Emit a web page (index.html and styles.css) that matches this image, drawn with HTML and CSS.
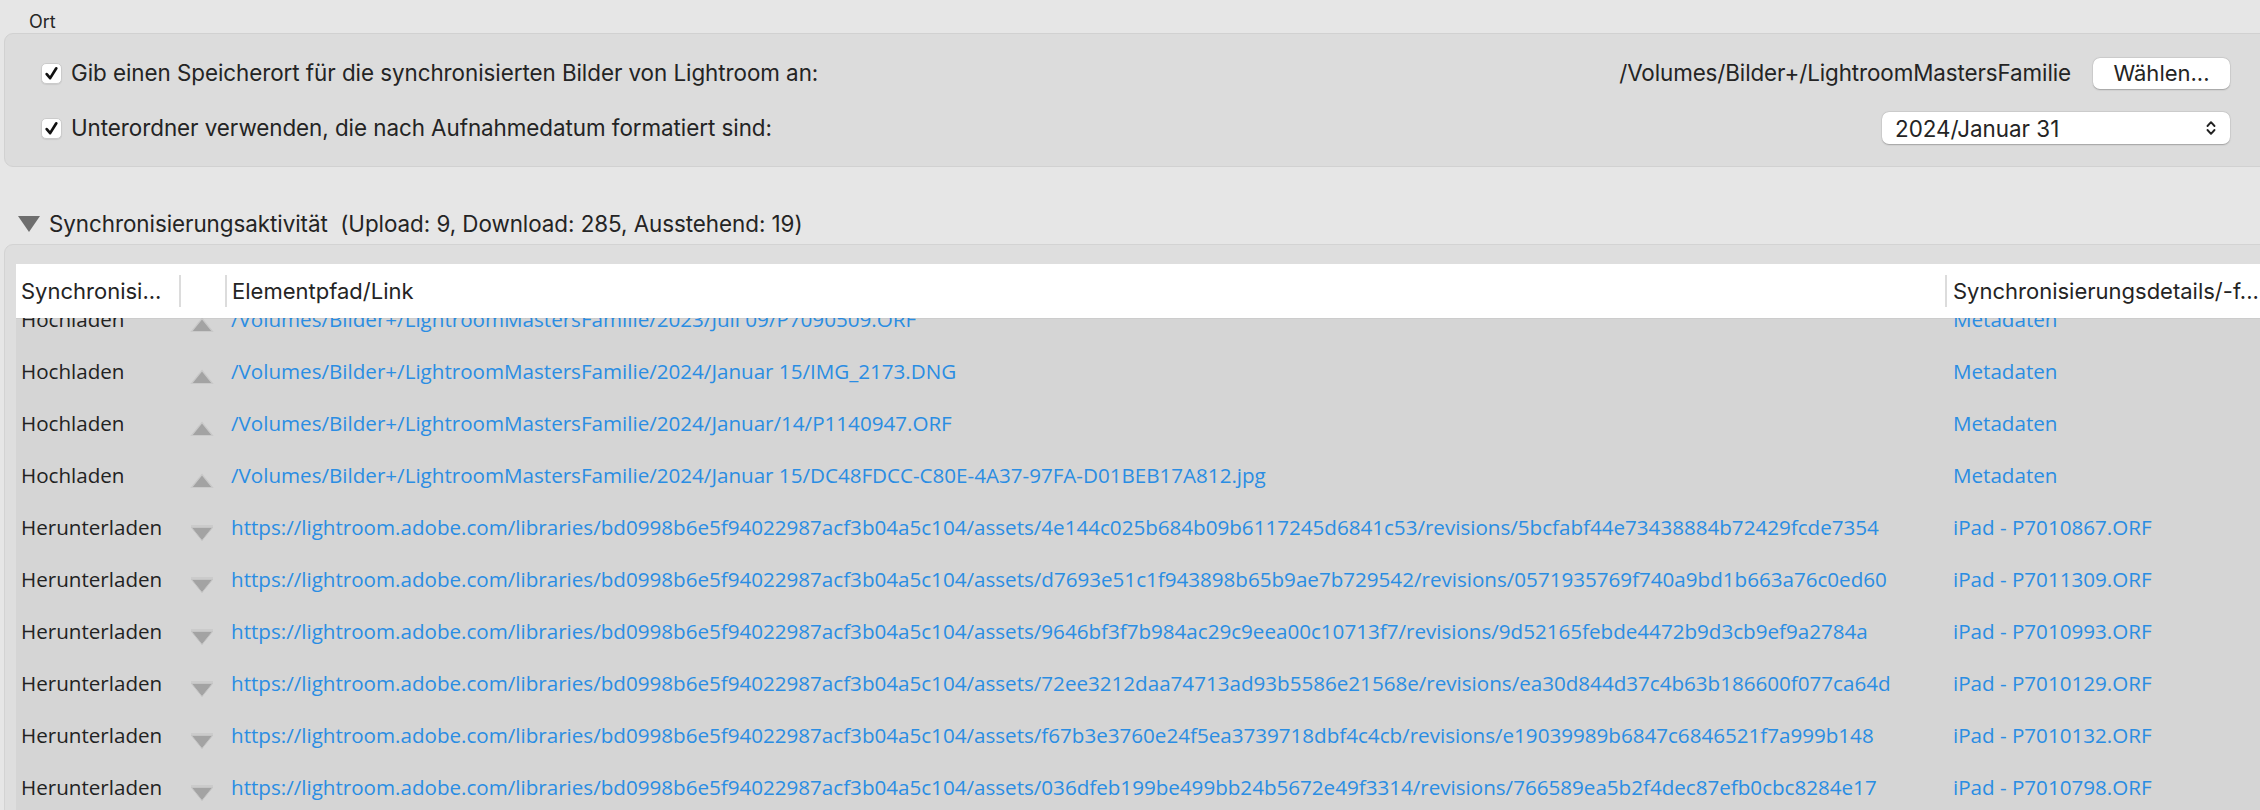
FILE: index.html
```html
<!DOCTYPE html>
<html lang="de">
<head>
<meta charset="utf-8">
<title>Lightroom Synchronisierung</title>
<link rel="stylesheet" href="styles.css">
</head>
<body>
<div class="page">
  <div class="group-label">Ort</div>
  <div class="group">
    <div class="opt-row">
      <div class="check">
        <span class="box"><svg width="21" height="21" viewBox="0 0 21 21"><path d="M5.2 11.2 L9 15.6 L15.8 4.8" fill="none" stroke="#111" stroke-width="3" stroke-linecap="round" stroke-linejoin="round"/></svg></span>
        <span class="check-text">Gib einen Speicherort für die synchronisierten Bilder von Lightroom an:</span>
      </div>
      <div class="spacer"></div>
      <span class="path">/Volumes/Bilder+/LightroomMastersFamilie</span>
      <div class="btn">Wählen...</div>
    </div>
    <div class="opt-row">
      <div class="check">
        <span class="box"><svg width="21" height="21" viewBox="0 0 21 21"><path d="M5.2 11.2 L9 15.6 L15.8 4.8" fill="none" stroke="#111" stroke-width="3" stroke-linecap="round" stroke-linejoin="round"/></svg></span>
        <span class="check-text">Unterordner verwenden, die nach Aufnahmedatum formatiert sind:</span>
      </div>
      <div class="spacer"></div>
      <div class="select">
        <span>2024/Januar 31</span>
        <svg width="12" height="18" viewBox="0 0 12 18"><path d="M2.5 7 L6 3.2 L9.5 7 M2.5 11 L6 14.8 L9.5 11" fill="none" stroke="#222" stroke-width="1.9" stroke-linecap="round" stroke-linejoin="round"/></svg>
      </div>
    </div>
  </div>

  <div class="section-title">
    <svg width="22" height="16" viewBox="0 0 22 16"><polygon points="0,0 22,0 11,16" fill="#6e6e6e"/></svg>
    <span class="section-text">Synchronisierungsaktivität&nbsp; (Upload: 9, Download: 285, Ausstehend: 19)</span>
  </div>

  <div class="table-wrap">
    <div class="thead cols">
      <div class="th c1"><span class="th-in">Synchronisi...</span></div>
      <div class="th c2"><span class="th-in sep"></span></div>
      <div class="th c3"><span class="th-in sep">Elementpfad/Link</span></div>
      <div class="th c4"><span class="th-in sep">Synchronisierungsdetails/-f...</span></div>
    </div>
    <div class="tbody">
      <div class="rows">
        <div class="row cols">
          <div class="td c1">Hochladen</div>
          <div class="td c2"><svg class="up" width="24" height="16" viewBox="0 0 24 16"><polygon points="12,1.5 22.5,14.5 1.5,14.5" fill="#a3a3a3" stroke="#c9c9c9" stroke-width="1.2"/></svg></div>
          <div class="td c3 link">/Volumes/Bilder+/LightroomMastersFamilie/2023/Juli 09/P7090509.ORF</div>
          <div class="td c4 link">Metadaten</div>
        </div>
        <div class="row cols">
          <div class="td c1">Hochladen</div>
          <div class="td c2"><svg class="up" width="24" height="16" viewBox="0 0 24 16"><polygon points="12,1.5 22.5,14.5 1.5,14.5" fill="#a3a3a3" stroke="#c9c9c9" stroke-width="1.2"/></svg></div>
          <div class="td c3 link">/Volumes/Bilder+/LightroomMastersFamilie/2024/Januar 15/IMG_2173.DNG</div>
          <div class="td c4 link">Metadaten</div>
        </div>
        <div class="row cols">
          <div class="td c1">Hochladen</div>
          <div class="td c2"><svg class="up" width="24" height="16" viewBox="0 0 24 16"><polygon points="12,1.5 22.5,14.5 1.5,14.5" fill="#a3a3a3" stroke="#c9c9c9" stroke-width="1.2"/></svg></div>
          <div class="td c3 link">/Volumes/Bilder+/LightroomMastersFamilie/2024/Januar/14/P1140947.ORF</div>
          <div class="td c4 link">Metadaten</div>
        </div>
        <div class="row cols">
          <div class="td c1">Hochladen</div>
          <div class="td c2"><svg class="up" width="24" height="16" viewBox="0 0 24 16"><polygon points="12,1.5 22.5,14.5 1.5,14.5" fill="#a3a3a3" stroke="#c9c9c9" stroke-width="1.2"/></svg></div>
          <div class="td c3 link">/Volumes/Bilder+/LightroomMastersFamilie/2024/Januar 15/DC48FDCC-C80E-4A37-97FA-D01BEB17A812.jpg</div>
          <div class="td c4 link">Metadaten</div>
        </div>
        <div class="row cols">
          <div class="td c1">Herunterladen</div>
          <div class="td c2"><svg class="down" width="24" height="18" viewBox="0 0 24 18"><rect x="1" y="1" width="22" height="2.5" fill="#cbcbcb"/><polygon points="1.5,3.5 22.5,3.5 12,16.5" fill="#a3a3a3" stroke="#c4c4c4" stroke-width="1"/></svg></div>
          <div class="td c3 link">https://lightroom.adobe.com/libraries/bd0998b6e5f94022987acf3b04a5c104/assets/4e144c025b684b09b6117245d6841c53/revisions/5bcfabf44e73438884b72429fcde7354</div>
          <div class="td c4 link">iPad - P7010867.ORF</div>
        </div>
        <div class="row cols">
          <div class="td c1">Herunterladen</div>
          <div class="td c2"><svg class="down" width="24" height="18" viewBox="0 0 24 18"><rect x="1" y="1" width="22" height="2.5" fill="#cbcbcb"/><polygon points="1.5,3.5 22.5,3.5 12,16.5" fill="#a3a3a3" stroke="#c4c4c4" stroke-width="1"/></svg></div>
          <div class="td c3 link">https://lightroom.adobe.com/libraries/bd0998b6e5f94022987acf3b04a5c104/assets/d7693e51c1f943898b65b9ae7b729542/revisions/0571935769f740a9bd1b663a76c0ed60</div>
          <div class="td c4 link">iPad - P7011309.ORF</div>
        </div>
        <div class="row cols">
          <div class="td c1">Herunterladen</div>
          <div class="td c2"><svg class="down" width="24" height="18" viewBox="0 0 24 18"><rect x="1" y="1" width="22" height="2.5" fill="#cbcbcb"/><polygon points="1.5,3.5 22.5,3.5 12,16.5" fill="#a3a3a3" stroke="#c4c4c4" stroke-width="1"/></svg></div>
          <div class="td c3 link">https://lightroom.adobe.com/libraries/bd0998b6e5f94022987acf3b04a5c104/assets/9646bf3f7b984ac29c9eea00c10713f7/revisions/9d52165febde4472b9d3cb9ef9a2784a</div>
          <div class="td c4 link">iPad - P7010993.ORF</div>
        </div>
        <div class="row cols">
          <div class="td c1">Herunterladen</div>
          <div class="td c2"><svg class="down" width="24" height="18" viewBox="0 0 24 18"><rect x="1" y="1" width="22" height="2.5" fill="#cbcbcb"/><polygon points="1.5,3.5 22.5,3.5 12,16.5" fill="#a3a3a3" stroke="#c4c4c4" stroke-width="1"/></svg></div>
          <div class="td c3 link">https://lightroom.adobe.com/libraries/bd0998b6e5f94022987acf3b04a5c104/assets/72ee3212daa74713ad93b5586e21568e/revisions/ea30d844d37c4b63b186600f077ca64d</div>
          <div class="td c4 link">iPad - P7010129.ORF</div>
        </div>
        <div class="row cols">
          <div class="td c1">Herunterladen</div>
          <div class="td c2"><svg class="down" width="24" height="18" viewBox="0 0 24 18"><rect x="1" y="1" width="22" height="2.5" fill="#cbcbcb"/><polygon points="1.5,3.5 22.5,3.5 12,16.5" fill="#a3a3a3" stroke="#c4c4c4" stroke-width="1"/></svg></div>
          <div class="td c3 link">https://lightroom.adobe.com/libraries/bd0998b6e5f94022987acf3b04a5c104/assets/f67b3e3760e24f5ea3739718dbf4c4cb/revisions/e19039989b6847c6846521f7a999b148</div>
          <div class="td c4 link">iPad - P7010132.ORF</div>
        </div>
        <div class="row cols">
          <div class="td c1">Herunterladen</div>
          <div class="td c2"><svg class="down" width="24" height="18" viewBox="0 0 24 18"><rect x="1" y="1" width="22" height="2.5" fill="#cbcbcb"/><polygon points="1.5,3.5 22.5,3.5 12,16.5" fill="#a3a3a3" stroke="#c4c4c4" stroke-width="1"/></svg></div>
          <div class="td c3 link">https://lightroom.adobe.com/libraries/bd0998b6e5f94022987acf3b04a5c104/assets/036dfeb199be499bb24b5672e49f3314/revisions/766589ea5b2f4dec87efb0cbc8284e17</div>
          <div class="td c4 link">iPad - P7010798.ORF</div>
        </div>
      </div>
    </div>
  </div>
</div>
</body>
</html>
```

FILE: styles.css
```css
html, body {
  margin: 0;
  padding: 0;
  width: 2260px;
  height: 810px;
  overflow: hidden;
  background: #e6e6e6;
}

.page {
  width: 2260px;
  height: 810px;
  overflow: hidden;
  font-family: Inter, "Liberation Sans", sans-serif;
  color: #242424;
}

.group-label {
  height: 33px;
  box-sizing: border-box;
  padding: 11px 0 0 29px;
  font-size: 18px;
  line-height: 22px;
  color: #262626;
}

.group {
  margin-left: 4px;
  margin-right: -40px;
  height: 134px;
  box-sizing: border-box;
  background: #dcdcdc;
  border: 1px solid #d1d1d1;
  border-radius: 9px;
  padding: 23px 69px 0 36px;
  display: flex;
  flex-direction: column;
  gap: 23px;
}

.opt-row {
  height: 32px;
  display: flex;
  align-items: center;
}

.check {
  display: flex;
  align-items: center;
  gap: 9px;
}

.box {
  width: 21px;
  height: 21px;
  box-sizing: border-box;
  background: #fff;
  border: 1px solid #cbcbcb;
  border-radius: 5px;
  box-shadow: 0 1px 1px rgba(0,0,0,0.08);
  display: flex;
  align-items: center;
  justify-content: center;
}

.box svg { display: block; }

.check-text {
  font-size: 22.4px;
  line-height: 28px;
  letter-spacing: -0.05px;
}

.spacer { flex: 1; }

.path {
  font-size: 22.4px;
  line-height: 28px;
  margin-right: 22px;
  letter-spacing: -0.1px;
}

.btn {
  width: 137px;
  height: 31px;
  box-sizing: border-box;
  background: #fff;
  border-radius: 7px;
  box-shadow: 0 0.5px 1.5px rgba(0,0,0,0.25), 0 0 0 0.5px rgba(0,0,0,0.05);
  font-size: 22px;
  line-height: 31px;
  text-align: center;
}

.select {
  width: 348px;
  height: 32px;
  box-sizing: border-box;
  background: #fff;
  border-radius: 7px;
  box-shadow: 0 0.5px 1.5px rgba(0,0,0,0.25), 0 0 0 0.5px rgba(0,0,0,0.05);
  display: flex;
  align-items: center;
  justify-content: space-between;
  padding: 0 13px 0 13px;
  font-size: 22.4px;
}

.select svg { display: block; }

.section-title {
  margin-top: 37px;
  height: 40px;
  display: flex;
  align-items: center;
  padding-left: 18px;
  gap: 9px;
}

.section-title svg { display: block; }

.section-text {
  font-size: 22.4px;
  line-height: 28px;
  letter-spacing: -0.05px;
}

.table-wrap {
  margin-left: 4px;
  margin-right: -40px;
  height: 600px;
  box-sizing: border-box;
  background: #dedede;
  border: 1px solid #d3d3d3;
  border-radius: 9px 0 0 0;
  padding: 19px 0 0 11px;
}

.cols {
  display: grid;
  grid-template-columns: 163px 46px 1720px 1fr;
}

.thead {
  height: 54px;
  background: #fff;
  position: relative;
  z-index: 1;
  align-items: center;
  box-shadow: 0 1px 0 rgba(0,0,0,0.04);
}

.th {
  height: 32px;
  display: flex;
}

.th-in {
  display: flex;
  align-items: center;
  flex: 1;
  font-size: 22px;
  white-space: nowrap;
}

.c1 .th-in { padding-left: 5px; }

.th-in.sep {
  border-left: 2px solid #dcdcdc;
  padding-left: 5px;
}

.c4 .th-in.sep { padding-left: 6px; }

.tbody {
  background: #d5d5d5;
  height: 520px;
  overflow: hidden;
}

.rows {
  margin-top: -25px;
}

.row {
  height: 52px;
  align-items: center;
}

.td {
  font-family: "Open Sans", "Noto Sans", sans-serif;
  font-size: 20.6px;
  white-space: nowrap;
  color: #222;
}

.row .c1 { padding-left: 5px; }

.row .c2 {
  display: flex;
  justify-content: center;
  padding-top: 12px;
}

.row .c2 svg { display: block; }

.row .c3 { padding-left: 6px; }

.row .c4 { padding-left: 8px; }

.link { color: #2a8de3; }
```
